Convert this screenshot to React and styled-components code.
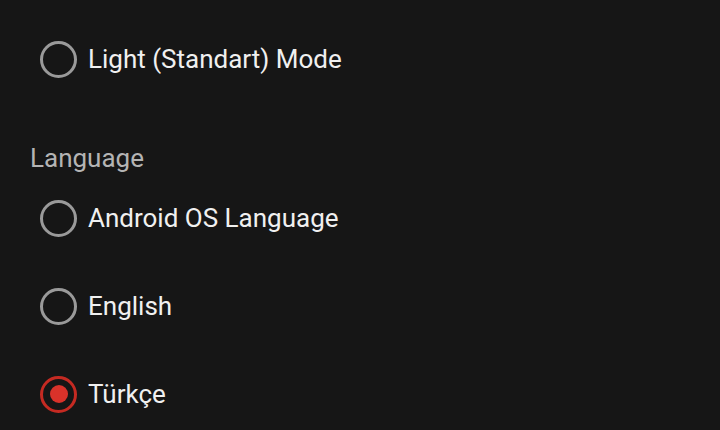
import React from "react";
import styled, { createGlobalStyle } from "styled-components";

const Global = createGlobalStyle`
  html, body { margin: 0; padding: 0; background: #161616; }
  body { font-family: Roboto, "Noto Sans", sans-serif; }
`;

const Screen = styled.div`
  width: 720px;
  height: 430px;
  overflow: hidden;
  background: #161616;
  padding-top: 15px;
  box-sizing: border-box;
`;

const Row = styled.label`
  display: flex;
  align-items: center;
  gap: 11px;
  height: 88px;
  padding-left: 40px;
  box-sizing: border-box;
`;

const Radio = styled.span`
  width: 37px;
  height: 37px;
  box-sizing: border-box;
  border-radius: 50%;
  border: 3.5px solid ${(p) => (p.$checked ? "#c52a22" : "#9a9a9a")};
  display: flex;
  align-items: center;
  justify-content: center;
  flex: none;
  &::after {
    content: "";
    width: 18px;
    height: 18px;
    border-radius: 50%;
    background: #d9322a;
    display: ${(p) => (p.$checked ? "block" : "none")};
  }
`;

const Text = styled.span`
  color: #f0f0f0;
  font-size: 26px;
  line-height: 30px;
`;

const SectionLabel = styled.div`
  color: #b4b4b4;
  font-size: 26px;
  line-height: 30px;
  padding: 40px 0 0 30px;
  height: 31px;
`;

export default function App() {
  return (
    <>
      <Global />
      <Screen>
        <Row>
          <Radio />
          <Text>Light (Standart) Mode</Text>
        </Row>
        <SectionLabel>Language</SectionLabel>
        <Row>
          <Radio />
          <Text>Android OS Language</Text>
        </Row>
        <Row>
          <Radio />
          <Text>English</Text>
        </Row>
        <Row>
          <Radio $checked />
          <Text>Türkçe</Text>
        </Row>
      </Screen>
    </>
  );
}
